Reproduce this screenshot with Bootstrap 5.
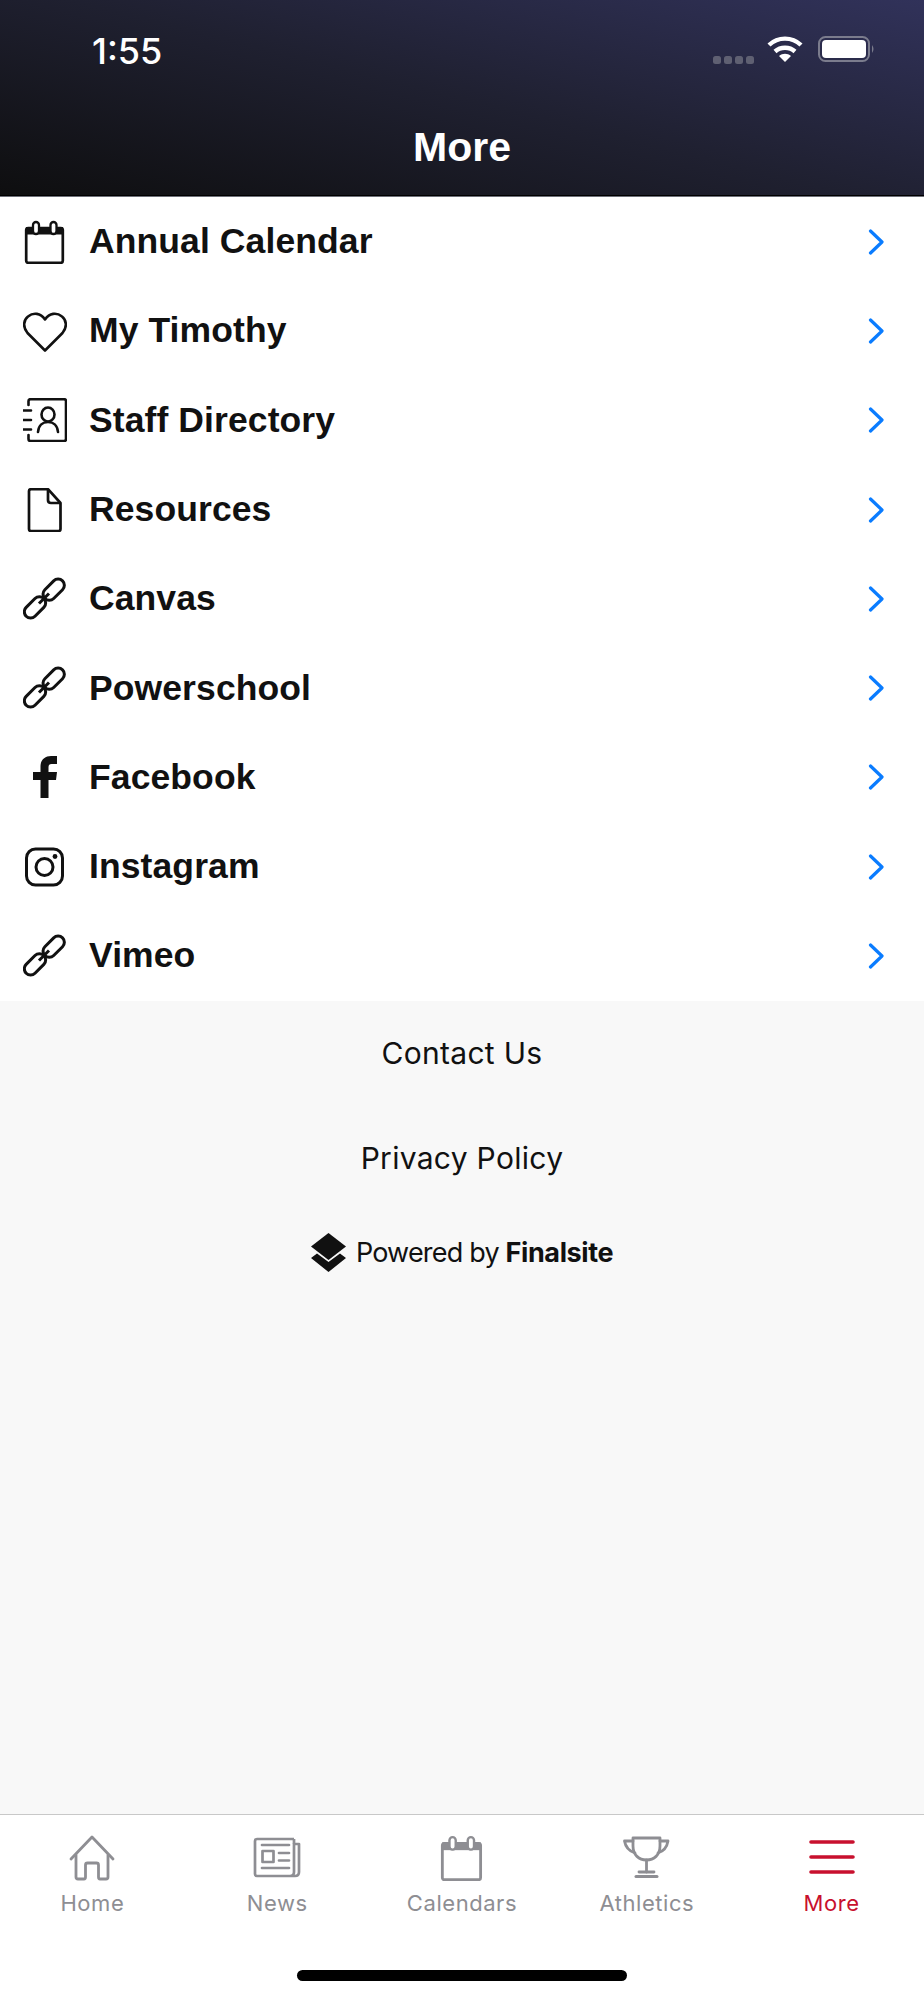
<!DOCTYPE html>
<html lang="en">
<head>
    <meta charset="UTF-8">
    <meta name="viewport" content="width=device-width, initial-scale=1.0">
    <title>More</title>
    <link href="https://cdn.jsdelivr.net/npm/bootstrap@5.3.0/dist/css/bootstrap.min.css" rel="stylesheet">
    <style>
        body {
            font-family: "Liberation Sans", Arial, sans-serif;
            background: #f8f8f8;
            color: #111;
        }
        .app-shell {
            height: 2000px;
        }
        /* header */
        .top-header {
            height: 197px;
            background-image: linear-gradient(14deg, #0e0e0f 0%, #1f2030 50%, #31325a 100%);
            border-bottom: 1px solid #6d6f78;
            box-shadow: inset 0 -1px 0 #000;
            color: #fff;
        }
        .status-row {
            height: 121px;
            padding: 31px 48px 0 92px;
        }
        .status-time {
            font-family: Inter, "Liberation Sans", sans-serif;
            font-size: 36px;
            font-weight: 500;
            line-height: 40px;
        }
        .status-icons {
            margin-top: 3px;
        }
        .signal-dots {
            gap: 3px;
            margin: 21px 13px 0 0;
        }
        .signal-dot {
            width: 8px;
            height: 8px;
            border-radius: 2.5px;
            background: #5f6072;
        }
        .status-batt {
            margin-left: 13px;
        }
        .page-title {
            font-size: 41px;
            font-weight: 700;
            line-height: 46px;
            margin: 3px 0 0;
        }
        /* menu rows */
        .menu-row {
            height: 89.3px;
            padding: 0 40px 0 23px;
            color: #111;
            font-size: 35.5px;
            font-weight: 700;
            letter-spacing: .1px;
            border: 0;
            gap: 22px;
        }
        .menu-icon {
            width: 44px;
            height: 44px;
            flex: none;
        }
        .menu-chevron {
            width: 16px;
            height: 26px;
            flex: none;
        }
        /* footer links */
        .footer-links {
            font-family: Inter, "Liberation Sans", sans-serif;
            background: #f8f8f8;
        }
        .footer-link {
            display: block;
            height: 105px;
            line-height: 105px;
            font-size: 30px;
            color: #111;
            text-decoration: none;
            letter-spacing: .3px;
        }
        .powered-row {
            font-size: 27px;
            line-height: 40px;
            margin-top: 22px;
            gap: 10px;
            letter-spacing: -.8px;
        }
        .powered-row b {
            font-weight: 700;
            letter-spacing: -.4px;
        }
        /* tab bar */
        .tab-bar {
            height: 186px;
            background: #fff;
            border-top: 1px solid #c8c8c8;
            font-family: Inter, "Liberation Sans", sans-serif;
            padding-top: 20px;
        }
        .tab-item {
            flex: 1 1 0;
            color: #8e8e93;
            font-size: 22px;
            line-height: 26px;
            letter-spacing: .55px;
            text-decoration: none;
        }
        .tab-item svg {
            width: 48px;
            height: 46px;
            margin-bottom: 9px;
        }
        .tab-item.is-active {
            color: #c8102e;
        }
        .home-pill {
            width: 330px;
            height: 11px;
            border-radius: 6px;
            background: #000;
            margin: 54px auto 0;
        }
    </style>
</head>
<body>
    <svg width="0" height="0" class="d-block">
        <defs>
            <symbol id="ic-cal" viewBox="0 0 44 44">
                <rect x="3.2" y="8" width="36.6" height="34.8" rx="2" fill="none" stroke="currentColor" stroke-width="2.7"/>
                <rect x="3" y="7" width="37" height="7.5" fill="currentColor"/>
                <rect x="10" y="2" width="6" height="12" rx="3" fill="#fff" stroke="currentColor" stroke-width="2.3"/>
                <rect x="27.5" y="2" width="6" height="12" rx="3" fill="#fff" stroke="currentColor" stroke-width="2.3"/>
            </symbol>
            <symbol id="ic-link" viewBox="0 0 44 44">
                <g fill="none" stroke="currentColor" stroke-width="3">
                    <rect x="18.2" y="6.45" width="25" height="12.5" rx="6.25" transform="rotate(-45 30.7 12.7)"/>
                    <rect x="-0.5" y="24.15" width="25" height="12.5" rx="6.25" transform="rotate(-45 12 30.4)"/>
                    <path d="M16 26.5 L26 16.5"/>
                </g>
            </symbol>
            <symbol id="ic-chev" viewBox="0 0 16 26">
                <path d="M2.5 2 L14 13 L2.5 24" fill="none" stroke="#0a7cff" stroke-width="3.2" stroke-linecap="round" stroke-linejoin="round"/>
            </symbol>
        </defs>
    </svg>

    <div class="app-shell d-flex flex-column">
        <header class="top-header">
            <div class="status-row d-flex justify-content-between align-items-start">
                <span class="status-time">1:55</span>
                <div class="status-icons d-flex align-items-center">
                    <div class="signal-dots d-flex">
                        <span class="signal-dot"></span><span class="signal-dot"></span><span class="signal-dot"></span><span class="signal-dot"></span>
                    </div>
                    <svg width="36" height="28" viewBox="0 0 36 28" fill="none" stroke="#fff" stroke-width="4.4">
                        <path d="M2 10 C11 1.5 25 1.5 34 10"/>
                        <path d="M8 16.5 C13.5 11.5 22.5 11.5 28 16.5"/>
                        <path d="M18 27 L12 21 C15.5 18 20.5 18 24 21 Z" fill="#fff" stroke="none"/>
                    </svg>
                    <svg class="status-batt" width="60" height="30" viewBox="0 0 60 30">
                        <rect x="3" y="3" width="50" height="24" rx="6.5" fill="none" stroke="#7b7c8d" stroke-width="2"/>
                        <rect x="6" y="6" width="44" height="18" rx="4" fill="#fff"/>
                        <path d="M56 11 q3 4 0 8 z" fill="#7b7c8d"/>
                    </svg>
                </div>
            </div>
            <h1 class="page-title text-center">More</h1>
        </header>

        <div class="list-group list-group-flush rounded-0">
            <a href="#" class="list-group-item menu-row d-flex align-items-center">
                <svg class="menu-icon"><use href="#ic-cal"/></svg>
                <span class="flex-grow-1">Annual Calendar</span>
                <svg class="menu-chevron"><use href="#ic-chev"/></svg>
            </a>
            <a href="#" class="list-group-item menu-row d-flex align-items-center">
                <svg class="menu-icon" viewBox="0 0 44 44" fill="none" stroke="currentColor" stroke-width="2.6" stroke-linejoin="round"><path d="M22 41.5 L4.5 24 C-0.5 18 0.5 11 5 7.5 C10.5 3 17.5 4 22 10.5 C26.5 4 33.5 3 39 7.5 C43.5 11 44.5 18 39.5 24 Z"/></svg>
                <span class="flex-grow-1">My Timothy</span>
                <svg class="menu-chevron"><use href="#ic-chev"/></svg>
            </a>
            <a href="#" class="list-group-item menu-row d-flex align-items-center">
                <svg class="menu-icon" viewBox="0 0 44 44" fill="none" stroke="currentColor" stroke-width="2.6" stroke-linecap="round"><path d="M5.5 7 V3 Q5.5 1.2 7.5 1.2 H41 Q43 1.2 43 3 V41 Q43 43 41 43 H7.5 Q5.5 43 5.5 41 V37"/><path d="M0.5 12.5 H8 M0.5 22 H8 M0.5 31.5 H8"/><ellipse cx="25" cy="16.5" rx="6.5" ry="7"/><path d="M15 34 C15.5 27 20 24 25 24 C30 24 34.5 27 35 34"/></svg>
                <span class="flex-grow-1">Staff Directory</span>
                <svg class="menu-chevron"><use href="#ic-chev"/></svg>
            </a>
            <a href="#" class="list-group-item menu-row d-flex align-items-center">
                <svg class="menu-icon" viewBox="0 0 44 44" fill="none" stroke="currentColor" stroke-width="2.7" stroke-linejoin="round"><path d="M8 1.2 H25 L37.5 15 V41 Q37.5 43 35.5 43 H8 Q6 43 6 41 V3 Q6 1.2 8 1.2 Z"/><path d="M25 1.2 V12 Q25 15 28 15 H37.5"/></svg>
                <span class="flex-grow-1">Resources</span>
                <svg class="menu-chevron"><use href="#ic-chev"/></svg>
            </a>
            <a href="#" class="list-group-item menu-row d-flex align-items-center">
                <svg class="menu-icon"><use href="#ic-link"/></svg>
                <span class="flex-grow-1">Canvas</span>
                <svg class="menu-chevron"><use href="#ic-chev"/></svg>
            </a>
            <a href="#" class="list-group-item menu-row d-flex align-items-center">
                <svg class="menu-icon"><use href="#ic-link"/></svg>
                <span class="flex-grow-1">Powerschool</span>
                <svg class="menu-chevron"><use href="#ic-chev"/></svg>
            </a>
            <a href="#" class="list-group-item menu-row d-flex align-items-center">
                <svg class="menu-icon" viewBox="0 0 44 44" fill="currentColor"><path d="M34 1 H28 C22 1 17.5 5 17.5 11 V17 H10 V25 H17.5 V43 H25.5 V25 H33 L34 17 H25.5 V12 C25.5 10 26.5 9 28.5 9 H34 Z"/></svg>
                <span class="flex-grow-1">Facebook</span>
                <svg class="menu-chevron"><use href="#ic-chev"/></svg>
            </a>
            <a href="#" class="list-group-item menu-row d-flex align-items-center">
                <svg class="menu-icon" viewBox="0 0 44 44" fill="none" stroke="currentColor" stroke-width="3"><rect x="3.5" y="4" width="36" height="36" rx="9"/><circle cx="21.5" cy="22" r="8.5"/><circle cx="32" cy="11.5" r="2.4" fill="currentColor" stroke="none"/></svg>
                <span class="flex-grow-1">Instagram</span>
                <svg class="menu-chevron"><use href="#ic-chev"/></svg>
            </a>
            <a href="#" class="list-group-item menu-row d-flex align-items-center">
                <svg class="menu-icon"><use href="#ic-link"/></svg>
                <span class="flex-grow-1">Vimeo</span>
                <svg class="menu-chevron"><use href="#ic-chev"/></svg>
            </a>
        </div>

        <div class="footer-links flex-grow-1 text-center">
            <a href="#" class="footer-link">Contact Us</a>
            <a href="#" class="footer-link">Privacy Policy</a>
            <div class="powered-row d-flex justify-content-center align-items-center">
                <svg width="35" height="40" viewBox="0 0 35 40" fill="#111"><path d="M17.5 0 L35 13.5 L17.5 27 L0 13.5 Z"/><path d="M6 20.5 L17.5 29 L29 20.5 L35 25 L17.5 39 L0 25 Z"/></svg>
                <span>Powered by <b>Finalsite</b></span>
            </div>
        </div>

        <nav class="tab-bar">
            <div class="d-flex text-center">
                <a href="#" class="tab-item d-flex flex-column align-items-center">
                    <svg viewBox="0 0 48 46" fill="none" stroke="currentColor" stroke-width="2.8" stroke-linejoin="round" stroke-linecap="round"><path d="M3 24 L24 2 L45 24"/><path d="M8 20 V42 Q8 44 10 44 H16 Q17.5 44 17.5 42 V30 Q17.5 28 19.5 28 H28.5 Q30.5 28 30.5 30 V42 Q30.5 44 32 44 H38 Q40 44 40 42 V20"/></svg>
                    Home
                </a>
                <a href="#" class="tab-item d-flex flex-column align-items-center">
                    <svg viewBox="0 0 48 46" fill="none" stroke="currentColor" stroke-width="2.7" stroke-linejoin="round"><path d="M41 4 H4 Q2 4 2 6 V39 Q2 41 4 41 H42 Q46 41 46 37 V9 H41 V37 Q41 41 37 41"/><path d="M41 9 V4"/><path d="M9 10 H36 M9 33 H36 M26 18 H36 M26 25.5 H36" stroke-linecap="round"/><rect x="9.5" y="16" width="11" height="11"/></svg>
                    News
                </a>
                <a href="#" class="tab-item d-flex flex-column align-items-center">
                    <svg viewBox="0 0 44 44"><use href="#ic-cal"/></svg>
                    Calendars
                </a>
                <a href="#" class="tab-item d-flex flex-column align-items-center">
                    <svg viewBox="0 0 48 46" fill="none" stroke="currentColor" stroke-width="2.8" stroke-linecap="round" stroke-linejoin="round"><path d="M10 3 H37 V11 C37 20 31 25 23.5 25 C16 25 10 20 10 11 Z"/><path d="M10 6 H1.5 C2.5 12 6 16 12 18 M37 6 H45 C44 12 41 16 35 18"/><path d="M23.5 25 V37"/><path d="M16 37 H31"/><path d="M13 41.5 H34" stroke-width="3"/></svg>
                    Athletics
                </a>
                <a href="#" class="tab-item is-active d-flex flex-column align-items-center">
                    <svg viewBox="0 0 48 46" fill="none" stroke="currentColor" stroke-width="3.6" stroke-linecap="round"><path d="M3 7 H45 M3 22 H45 M3 37 H45"/></svg>
                    More
                </a>
            </div>
            <div class="home-pill"></div>
        </nav>
    </div>

    <script src="https://cdn.jsdelivr.net/npm/bootstrap@5.3.0/dist/js/bootstrap.bundle.min.js"></script>
</body>
</html>
